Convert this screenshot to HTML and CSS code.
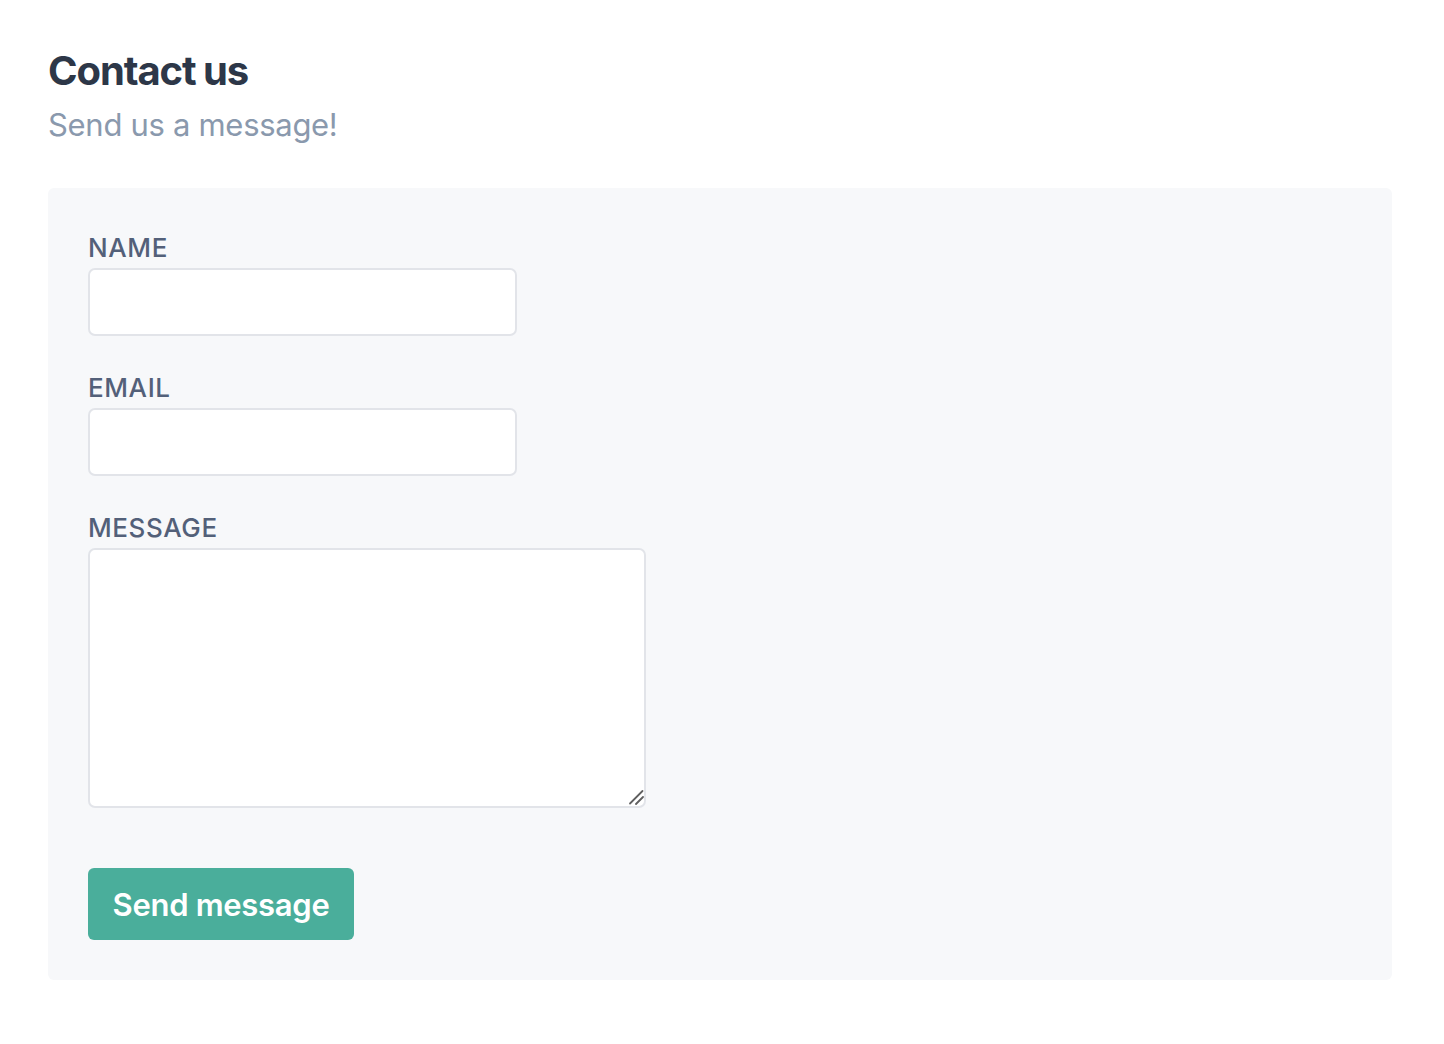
FILE: index.html
```html
<!DOCTYPE html>
<html lang="en">
<head>
<meta charset="utf-8">
<title>Contact us</title>
<link rel="stylesheet" href="styles.css">
</head>
<body>
<main class="page">
  <header class="intro">
    <h1 class="title">Contact us</h1>
    <p class="subtitle">Send us a message!</p>
  </header>
  <form class="card">
    <div class="field">
      <label class="label" for="name">NAME</label>
      <input class="input" id="name" type="text">
    </div>
    <div class="field">
      <label class="label" for="email">EMAIL</label>
      <input class="input" id="email" type="email">
    </div>
    <div class="field">
      <label class="label" for="message">MESSAGE</label>
      <div class="textarea-wrap">
        <textarea class="textarea" id="message"></textarea>
        <svg class="grip" width="16" height="16" viewBox="0 0 16 16" aria-hidden="true">
          <line x1="2" y1="14.5" x2="14.5" y2="2" stroke="#5f5f5f" stroke-width="1.8" stroke-linecap="round"/>
          <line x1="8" y1="15" x2="15" y2="8" stroke="#5f5f5f" stroke-width="1.8" stroke-linecap="round"/>
        </svg>
      </div>
    </div>
    <button class="button" type="button">Send message</button>
  </form>
</main>
</body>
</html>
```
FILE: styles.css
```css
* { box-sizing: border-box; }
html, body { margin: 0; padding: 0; background: #ffffff; }
body { font-family: Inter, "Noto Sans", "Liberation Sans", sans-serif; }
.page { padding: 44px 52px 0 48px; }
.intro { margin-bottom: 43px; }
.title {
  margin: 0;
  font-size: 40px;
  line-height: 54px;
  font-weight: 700;
  color: #2d3748;
  letter-spacing: -1.1px;
  word-spacing: -1px;
}
.subtitle {
  margin: 7px 0 0 0;
  font-size: 31px;
  line-height: 40px;
  font-weight: 400;
  color: #8a99ad;
  letter-spacing: -0.3px;
}
.card {
  background: #f7f8fa;
  border-radius: 6px;
  padding: 40px 40px 40px 40px;
  display: flex;
  flex-direction: column;
  align-items: flex-start;
}
.field {
  display: flex;
  flex-direction: column;
  align-items: flex-start;
  margin-bottom: 32px;
}
.label {
  font-size: 26px;
  line-height: 40px;
  font-weight: 500;
  color: #536079;
  letter-spacing: 0.6px;
}
.input {
  width: 429px;
  height: 68px;
  border: 2px solid #e2e4e9;
  border-radius: 7px;
  background: #ffffff;
  font: inherit;
}
.textarea-wrap {
  position: relative;
}
.textarea {
  width: 558px;
  height: 260px;
  border: 2px solid #e2e4e9;
  border-radius: 7px;
  background: #ffffff;
  font: inherit;
  resize: none;
  display: block;
}
.grip {
  position: absolute;
  right: 2px;
  bottom: 3px;
}
.button {
  margin-top: 28px;
  background: #4aae9b;
  color: #ffffff;
  border: none;
  border-radius: 6px;
  padding: 0 24px;
  width: 266px;
  height: 72px;
  font-family: inherit;
  font-size: 31px;
  font-weight: 600;
  letter-spacing: -0.3px;
}
```
